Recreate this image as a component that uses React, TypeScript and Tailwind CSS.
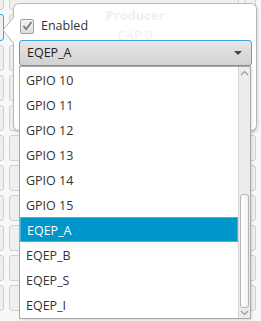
const items = ["GPIO 10", "GPIO 11", "GPIO 12", "GPIO 13", "GPIO 14", "GPIO 15", "EQEP_A", "EQEP_B", "EQEP_S", "EQEP_I"];
const selected = "EQEP_A";

const rows = [
  { h: 14, blue: false },
  { h: 27, blue: true },
  { h: 26, blue: false },
  { h: 26, blue: false },
  { h: 26, blue: false },
  { h: 26, blue: false },
  { h: 26, blue: false },
  { h: 26, blue: false },
  { h: 26, blue: false },
  { h: 26, blue: false },
  { h: 26, blue: false },
];

const Background = () => (
  <div className="flex flex-col gap-[4px] -mt-[4px]">
    {rows.map((r, i) => (
      <div key={i} className="flex gap-[5px]" style={{ height: r.h }}>
        <div
          className={`w-[12px] -ml-[8px] rounded-[3px] bg-[#efefef] border ${
            r.blue ? "border-[#3ba7e0]" : "border-[#cfcfcf]"
          }`}
        />
        <div className="w-[230px] rounded-[3px] bg-[#efefef] border border-[#cfcfcf]" />
        <div className="w-[12px] rounded-[3px] bg-[#efefef] border border-[#cfcfcf]" />
      </div>
    ))}
  </div>
);

const Chevron = ({ down }: { down?: boolean }) => (
  <svg width="9" height="6" viewBox="0 0 9 6" className="block">
    <path
      d={down ? "M1 1 L4.5 4.5 L8 1" : "M1 5 L4.5 1.5 L8 5"}
      fill="none"
      stroke="#9a9a9a"
      strokeWidth="1.1"
    />
  </svg>
);

export default function App() {
  return (
    <div className="relative w-[261px] h-[321px] overflow-hidden bg-[#f8f8f8] font-['Open_Sans',sans-serif] text-[12px] text-[#333]">
      <Background />

      {/* popover */}
      <div className="absolute left-[13px] top-[3px] w-[244px] h-[128px] rounded-[6px] border border-[#b9b9b9] bg-white shadow-[1px_2px_3px_rgba(0,0,0,0.15)]">
        <div className="flex flex-col items-center pt-[1px] leading-[20px] text-[#f0f0f0]">
          <span className="font-bold text-[13px]">Producer</span>
          <span className="text-[13px]">CAP 0</span>
        </div>
        <div className="absolute left-[6px] top-[13px] flex items-center gap-[7px]">
          <div className="w-[14px] h-[15px] rounded-[2px] border border-[#a0a0a0] bg-gradient-to-b from-[#f4f4f4] to-[#dcdcdc] flex items-center justify-center">
            <svg width="11" height="10" viewBox="0 0 11 10">
              <path d="M1.5 5 L4.2 8.2 L9.5 1" fill="none" stroke="#707070" strokeWidth="1.6" />
            </svg>
          </div>
          <span className="text-[12.5px] text-[#333]">Enabled</span>
        </div>
      </div>

      {/* arrow of popover */}
      <svg className="absolute left-[2px] top-[17px]" width="13" height="28" viewBox="0 0 13 28">
        <path d="M12 0 L1 13 L12 27" fill="white" stroke="#b9b9b9" strokeWidth="1" />
        <rect x="12" y="0" width="1" height="28" fill="white" />
      </svg>

      {/* combo box */}
      <div className="absolute left-[19px] top-[40px] w-[233px] h-[26px] rounded-[3px] border border-[#3ba7e0] bg-gradient-to-b from-[#e6e6e6] to-[#d2d2d2] flex items-center justify-between pl-[7px] pr-[9px]">
        <span className="text-[12.5px] text-[#222] pt-[1px]">EQEP_A</span>
        <svg width="8" height="4" viewBox="0 0 8 4">
          <path d="M0 0 L8 0 L4 4 Z" fill="#444" />
        </svg>
      </div>

      {/* dropdown list */}
      <div className="absolute left-[19px] top-[66px] w-[232px] h-[253px] border border-[#a9a9a9] bg-white flex shadow-[1px_1px_2px_rgba(0,0,0,0.12)]">
        <div className="flex-1 flex flex-col">
          {items.map((it) => (
            <div
              key={it}
              className={`h-[25px] flex items-center pt-[3px] pl-[6px] text-[12.5px] ${
                it === selected
                  ? "bg-[#0096c9] border border-[#3db3e3] pl-[5px] text-white"
                  : "text-[#333]"
              }`}
            >
              {it}
            </div>
          ))}
        </div>
        <div className="w-[12px] bg-[#ececec] border-l border-[#d6d6d6] flex flex-col items-center">
          <div className="h-[11px] flex items-center">
            <Chevron />
          </div>
          <div className="flex-1 w-full flex flex-col">
            <div className="h-[116px]" />
            <div className="h-[114px] mx-[1px] rounded-[3px] border border-[#b5b5b5] bg-gradient-to-r from-[#ffffff] to-[#f1f1f1]" />
          </div>
          <div className="h-[10px] flex items-center">
            <Chevron down />
          </div>
        </div>
      </div>
    </div>
  );
}
